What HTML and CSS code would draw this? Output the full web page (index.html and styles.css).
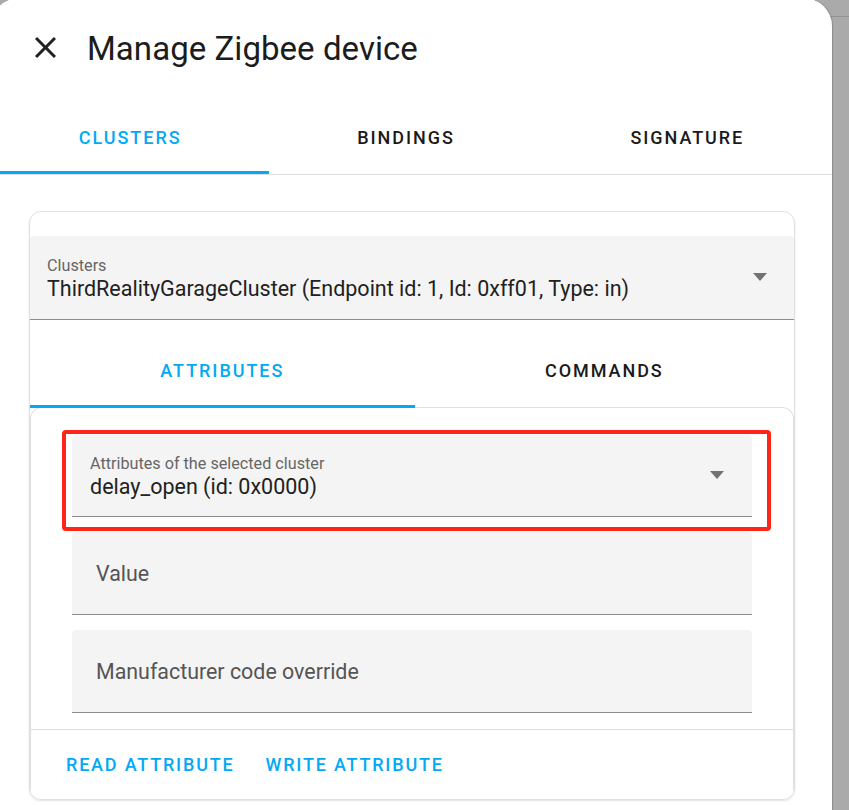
FILE: index.html
```html
<!DOCTYPE html>
<html>
<head>
<meta charset="utf-8">
<link rel="stylesheet" href="styles.css">
</head>
<body>
<div class="dialog">
  <header class="header">
    <svg class="close" viewBox="5 5 14 14" width="21" height="21"><path d="M19,6.41L17.59,5L12,10.59L6.41,5L5,6.41L10.59,12L5,17.59L6.41,19L12,13.41L17.59,19L19,17.59L13.41,12L19,6.41Z" fill="#212121"/></svg>
    <h1 class="title">Manage Zigbee device</h1>
  </header>
  <nav class="tabs main-tabs">
    <div class="tab active">Clusters</div>
    <div class="tab">Bindings</div>
    <div class="tab">Signature</div>
  </nav>
  <div class="content">
    <div class="card">
      <div class="select cluster-select">
        <div class="select-text">
          <div class="select-label">Clusters</div>
          <div class="select-value">ThirdRealityGarageCluster (Endpoint id: 1, Id: 0xff01, Type: in)</div>
        </div>
        <span class="arrow"></span>
      </div>
      <nav class="tabs sub-tabs">
        <div class="tab active">Attributes</div>
        <div class="tab">Commands</div>
      </nav>
      <div class="inner-card">
        <div class="inner-content">
          <div class="select attr-select">
            <div class="select-text">
              <div class="select-label">Attributes of the selected cluster</div>
              <div class="select-value">delay_open (id: 0x0000)</div>
            </div>
            <span class="arrow"></span>
            <div class="highlight"></div>
          </div>
          <div class="field"><span class="field-label">Value</span></div>
          <div class="field"><span class="field-label">Manufacturer code override</span></div>
        </div>
        <div class="actions">
          <span class="btn">Read attribute</span>
          <span class="btn">Write attribute</span>
        </div>
      </div>
    </div>
  </div>
</div>
</body>
</html>
```
FILE: styles.css
```css
html, body {
  margin: 0;
  padding: 0;
}
body {
  width: 849px;
  height: 810px;
  overflow: hidden;
  background: #aaaaaa linear-gradient(#949494, #949494) 0 16px / 100% 1px no-repeat;
  font-family: Roboto, "Noto Sans", sans-serif;
  color: #212121;
}
.dialog {
  width: 841px;
  height: 830px;
  margin-left: -9px;
  margin-top: -2px;
  background: #fff;
  border-radius: 28px 28px 0 0;
  box-sizing: border-box;
  box-shadow: 1px 0 1px rgba(0, 0, 0, 0.18);
}
.header {
  height: 114px;
  display: flex;
  align-items: flex-start;
  padding: 39px 0 0 44px;
  box-sizing: border-box;
}
.close {
  display: block;
  flex: none;
}
.title {
  margin: -8px 0 0 31px;
  font-size: 33px;
  line-height: 40px;
  font-weight: 400;
  color: #1c1c1c;
  letter-spacing: 0.05px;
}
.tabs {
  display: flex;
  border-bottom: 1px solid #e0e0e0;
}
.main-tabs {
  height: 62px;
}
.tab {
  position: relative;
  flex: 1 1 auto;
  display: flex;
  align-items: center;
  justify-content: center;
  padding-bottom: 12px;
  text-transform: uppercase;
  font-size: 18px;
  font-weight: 500;
  letter-spacing: 1.95px;
  color: #1a1a1a;
  box-sizing: border-box;
}
.tab.active {
  color: #03a9f4;
}
.tab.active::after {
  content: "";
  position: absolute;
  left: 0;
  right: 0;
  bottom: -1px;
  height: 3px;
  background: #03a9f4;
}
.main-tabs .tab.active::after {
  bottom: 0;
}
.content {
  padding: 36px 37px 0 38px;
}
.card {
  border: 1px solid #e0e0e0;
  border-radius: 12px;
  padding-top: 24px;
  height: 589px;
  box-sizing: border-box;
  overflow: hidden;
  box-shadow: 0 1px 2px rgba(0, 0, 0, 0.12);
}
.select {
  position: relative;
  background: #f4f4f4;
  border-bottom: 1px solid #8c8c8c;
  display: flex;
  align-items: center;
  border-radius: 4px 4px 0 0;
}
.cluster-select {
  height: 84px;
  padding: 0 27px 0 17px;
  box-sizing: border-box;
}
.select-text {
  flex: 1;
  padding-top: 2px;
}
.select-label {
  font-size: 16.2px;
  line-height: 19px;
  color: #666;
}
.select-value {
  font-size: 21.5px;
  line-height: 27px;
  color: #212121;
}
.arrow {
  width: 0;
  height: 0;
  border-left: 7.5px solid transparent;
  border-right: 7.5px solid transparent;
  border-top: 8px solid #727272;
  margin-top: -2px;
}
.sub-tabs {
  margin-top: 25px;
  height: 62px;
  border-bottom: none;
}
.inner-card {
  border: 1px solid #e0e0e0;
  border-bottom: none;
  border-radius: 12px 12px 0 0;
  height: 392px;
  box-sizing: border-box;
}
.inner-content {
  padding: 27px 41px 16px 41px;
  display: flex;
  flex-direction: column;
  gap: 15px;
}
.attr-select {
  height: 82px;
  padding: 0 28px 0 18px;
  box-sizing: border-box;
}
.highlight {
  position: absolute;
  left: -10px;
  right: -19px;
  top: -5px;
  bottom: -15px;
  border: 4px solid #ff2418;
  border-radius: 4px;
}
.field {
  height: 83px;
  background: #f4f4f4;
  border-bottom: 1px solid #8c8c8c;
  border-radius: 4px 4px 0 0;
  display: flex;
  align-items: center;
  padding: 0 0 0 24px;
  box-sizing: border-box;
}
.field-label {
  font-size: 21.4px;
  color: #555;
}
.actions {
  border-top: 1px solid #e0e0e0;
  height: 69px;
  display: flex;
  align-items: center;
  gap: 31px;
  padding-left: 35px;
}
.btn {
  text-transform: uppercase;
  font-size: 18px;
  font-weight: 500;
  letter-spacing: 1.8px;
  color: #03a9f4;
}
```
